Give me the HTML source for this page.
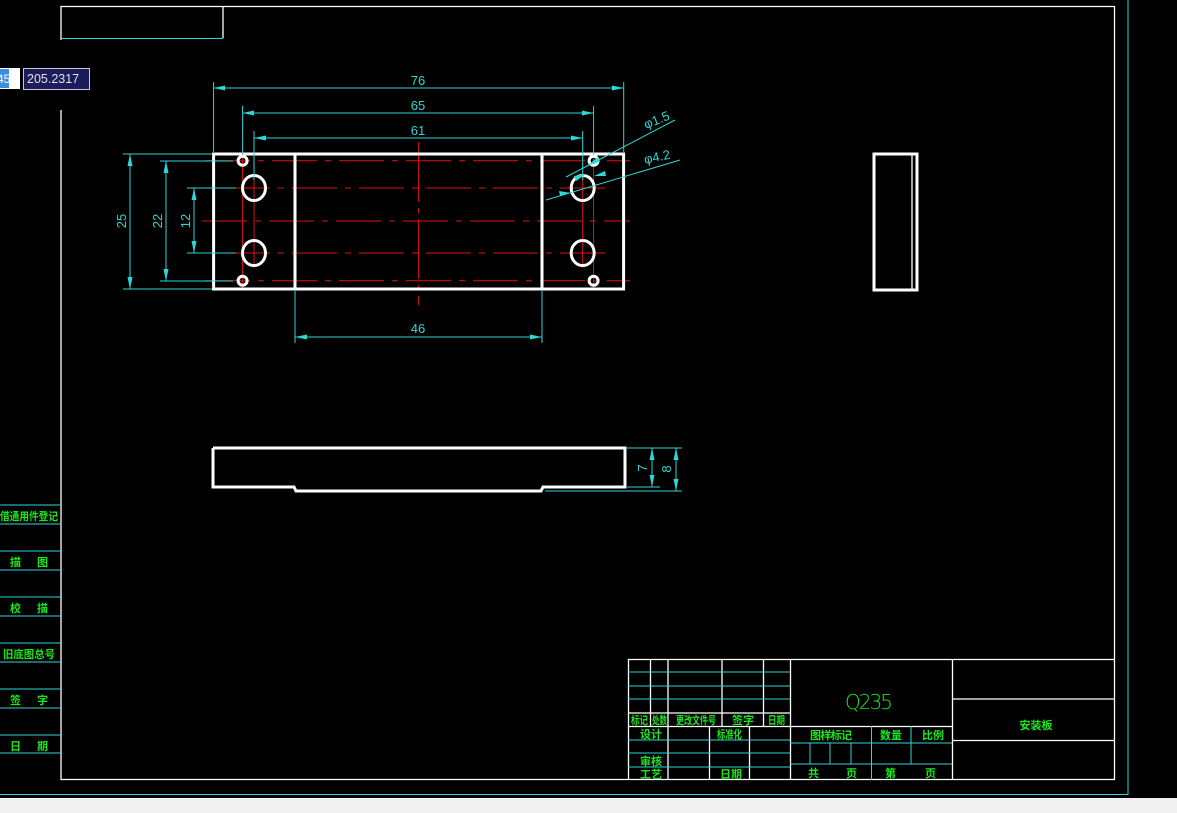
<!DOCTYPE html>
<html><head><meta charset="utf-8"><style>
html,body{margin:0;padding:0;background:#000;width:1177px;height:813px;overflow:hidden}
svg{display:block}
text{font-family:"Liberation Sans","Noto Sans CJK SC",sans-serif}
.w{stroke:#fff;fill:none;stroke-width:1.3}
.W{stroke:#fff;fill:none;stroke-width:3}
.c{stroke:#2fd6d6;fill:none;stroke-width:1}
.r{stroke:#e01010;fill:none;stroke-width:1;stroke-dasharray:45 8 6 8}
.d{fill:#2fd6d6;font-size:13px}
.g{fill:#1ee61e;font-size:11px;font-weight:bold}
.ar{fill:#2fd6d6}
</style></head><body>
<svg width="1177" height="813" viewBox="0 0 1177 813">
<rect x="0" y="0" width="1177" height="813" fill="#000"/>
<rect x="0" y="798" width="1177" height="15" fill="#f0f0f0"/>
<line x1="1128" y1="0" x2="1128" y2="795" class="c" stroke-width="1.5"/>
<line x1="0" y1="794.5" x2="1128" y2="794.5" class="c" stroke-width="1.5"/>
<polyline points="61,110 61,779.5 1114.5,779.5 1114.5,6.5 61,6.5 61,40" class="w"/>
<line x1="61" y1="38.5" x2="223" y2="38.5" class="c"/>
<line x1="223" y1="6" x2="223" y2="38" class="w"/>
<rect x="0" y="68" width="20" height="21" fill="#fff"/>
<rect x="0" y="69" width="9" height="19" fill="#3d8ee0"/>
<text x="-3" y="83" fill="#fff" font-size="12">45</text>
<rect x="23.5" y="68.5" width="66" height="21" fill="#1c1c5c" stroke="#c8c8c8"/>
<text x="27" y="83" fill="#e0e0e0" font-size="12.5">205.2317</text>
<g class="c">
<line x1="0" y1="505" x2="61" y2="505"/><line x1="0" y1="524" x2="61" y2="524"/>
<line x1="0" y1="551" x2="61" y2="551"/><line x1="0" y1="570" x2="61" y2="570"/>
<line x1="0" y1="597" x2="61" y2="597"/><line x1="0" y1="616" x2="61" y2="616"/>
<line x1="0" y1="643" x2="61" y2="643"/><line x1="0" y1="662" x2="61" y2="662"/>
<line x1="0" y1="689" x2="61" y2="689"/><line x1="0" y1="708" x2="61" y2="708"/>
<line x1="0" y1="735" x2="61" y2="735"/><line x1="0" y1="753" x2="61" y2="753"/>
</g>
<g class="g" font-size="13">
<text x="0" y="520" textLength="58" lengthAdjust="spacingAndGlyphs">借通用件登记</text>
<text x="10" y="566" textLength="38" lengthAdjust="spacing">描图</text>
<text x="10" y="612" textLength="38" lengthAdjust="spacing">校描</text>
<text x="3" y="658" textLength="52" lengthAdjust="spacingAndGlyphs">旧底图总号</text>
<text x="10" y="704" textLength="38" lengthAdjust="spacing">签字</text>
<text x="10" y="750" textLength="38" lengthAdjust="spacing">日期</text>
</g>
<g class="w">
<line x1="628" y1="659.5" x2="1114" y2="659.5"/>
<line x1="628.5" y1="659" x2="628.5" y2="780"/>
<line x1="650.5" y1="659" x2="650.5" y2="726"/>
<line x1="668" y1="659" x2="668" y2="780"/>
<line x1="722" y1="659" x2="722" y2="726"/>
<line x1="763.5" y1="659" x2="763.5" y2="726"/>
<line x1="790.5" y1="659" x2="790.5" y2="780"/>
<line x1="952.5" y1="659" x2="952.5" y2="780"/>
<line x1="628" y1="713" x2="790" y2="713"/>
<line x1="628" y1="726.5" x2="952" y2="726.5"/>
<line x1="709.5" y1="726" x2="709.5" y2="780"/>
<line x1="749.5" y1="726" x2="749.5" y2="780"/>
<line x1="952" y1="699" x2="1114" y2="699"/>
<line x1="952" y1="740.5" x2="1114" y2="740.5"/>
</g>
<g class="c">
<line x1="628" y1="672" x2="790" y2="672"/>
<line x1="628" y1="686" x2="790" y2="686"/>
<line x1="628" y1="699" x2="790" y2="699"/>
<line x1="628" y1="740" x2="790" y2="740"/>
<line x1="628" y1="753" x2="790" y2="753"/>
<line x1="628" y1="767" x2="790" y2="767"/>
<line x1="790" y1="743" x2="952" y2="743"/>
<line x1="790" y1="764" x2="952" y2="764"/>
<line x1="871.5" y1="726" x2="871.5" y2="780"/>
<line x1="911" y1="726" x2="911" y2="764"/>
<line x1="810" y1="743" x2="810" y2="764"/>
<line x1="830" y1="743" x2="830" y2="764"/>
<line x1="851" y1="743" x2="851" y2="764"/>
</g>
<g class="g" font-size="10">
<text x="631" y="724" textLength="17" lengthAdjust="spacingAndGlyphs">标记</text>
<text x="652" y="724" textLength="15" lengthAdjust="spacingAndGlyphs">处数</text>
<text x="676" y="724" textLength="40" lengthAdjust="spacingAndGlyphs">更改文件号</text>
<text x="732" y="724" textLength="22" lengthAdjust="spacing">签字</text>
<text x="768" y="724" textLength="17" lengthAdjust="spacingAndGlyphs">日期</text>
<text x="640" y="738" textLength="22" lengthAdjust="spacing">设计</text>
<text x="717" y="738" textLength="25" lengthAdjust="spacingAndGlyphs">标准化</text>
<text x="640" y="765" textLength="22" lengthAdjust="spacing">审核</text>
<text x="640" y="778" textLength="22" lengthAdjust="spacing">工艺</text>
<text x="720" y="778" textLength="22" lengthAdjust="spacing">日期</text>
<text x="810" y="739" textLength="42" lengthAdjust="spacing">图样标记</text>
<text x="880" y="739" textLength="22" lengthAdjust="spacing">数量</text>
<text x="922" y="739" textLength="22" lengthAdjust="spacing">比例</text>
<text x="808" y="777">共</text><text x="846" y="777">页</text><text x="885" y="777">第</text><text x="925" y="777">页</text>
</g>
<text x="869" y="709" text-anchor="middle" fill="#1ee61e" font-size="20" font-weight="300" textLength="48" lengthAdjust="spacing" style="font-family:'DejaVu Sans',sans-serif">Q235</text>
<text x="1036" y="729" text-anchor="middle" class="g" font-size="14">安装板</text>

<g class="r">
<line x1="205" y1="160.7" x2="630" y2="160.7"/>
<line x1="225" y1="188" x2="610" y2="188"/>
<line x1="202" y1="221" x2="630" y2="221"/>
<line x1="225" y1="253" x2="610" y2="253"/>
<line x1="205" y1="280.7" x2="630" y2="280.7"/>
<line x1="418.6" y1="142" x2="418.6" y2="305" stroke-dasharray="60 6 5 6"/>
<line x1="242.6" y1="150" x2="242.6" y2="290" stroke-dasharray="none"/>
<line x1="254" y1="175" x2="254" y2="268" stroke-dasharray="none"/>
<line x1="582.7" y1="175" x2="582.7" y2="268" stroke-dasharray="none"/>
<line x1="593.6" y1="150" x2="593.6" y2="290" stroke-dasharray="none"/>
</g>
<rect x="213.6" y="154" width="410" height="135" class="W"/>
<line x1="295" y1="154" x2="295" y2="289" class="W"/>
<line x1="542" y1="154" x2="542" y2="289" class="W"/>
<g class="W" stroke-width="2.5">
<ellipse cx="254" cy="188" rx="11.5" ry="12.5"/><ellipse cx="254" cy="253" rx="11.5" ry="12.5"/>
<ellipse cx="582.7" cy="188" rx="11.5" ry="12.5"/><ellipse cx="582.7" cy="253" rx="11.5" ry="12.5"/>
<circle cx="242.6" cy="160.7" r="4.5"/><circle cx="242.6" cy="280.7" r="4.5"/>
<circle cx="593.6" cy="160.7" r="4.5"/><circle cx="593.6" cy="280.7" r="4.5"/>
</g>
<g class="c">
<line x1="213.6" y1="82" x2="213.6" y2="152"/><line x1="623.7" y1="82" x2="623.7" y2="152"/>
<line x1="213.6" y1="88" x2="623.7" y2="88"/>
<line x1="242.6" y1="106" x2="242.6" y2="155"/><line x1="593.6" y1="106" x2="593.6" y2="155"/>
<line x1="242.6" y1="113" x2="593.6" y2="113"/>
<line x1="254" y1="131" x2="254" y2="180"/><line x1="582.7" y1="131" x2="582.7" y2="180"/>
<line x1="254" y1="138" x2="582.7" y2="138"/>
<line x1="295" y1="291" x2="295" y2="343"/><line x1="542" y1="291" x2="542" y2="343"/>
<line x1="295" y1="337" x2="542" y2="337"/>
<line x1="123" y1="154" x2="212" y2="154"/><line x1="123" y1="289" x2="212" y2="289"/>
<line x1="130" y1="154" x2="130" y2="289"/>
<line x1="160" y1="161" x2="233" y2="161"/><line x1="160" y1="281" x2="233" y2="281"/>
<line x1="166" y1="161" x2="166" y2="281"/>
<line x1="187" y1="188" x2="236" y2="188"/><line x1="187" y1="253" x2="236" y2="253"/>
<line x1="194" y1="188" x2="194" y2="253"/>
<line x1="566" y1="177" x2="675" y2="120"/>
<line x1="546" y1="200" x2="680" y2="160"/>
<line x1="627" y1="448" x2="682" y2="448"/><line x1="627" y1="487" x2="660" y2="487"/>
<line x1="545" y1="491" x2="682" y2="491"/>
<line x1="652" y1="448" x2="652" y2="487"/><line x1="676" y1="448" x2="676" y2="491"/>
</g>
<g class="ar">
<polygon points="213.6,88 225,85.5 225,90.5"/><polygon points="623.7,88 612,85.5 612,90.5"/>
<polygon points="242.6,113 254,110.5 254,115.5"/><polygon points="593.6,113 582,110.5 582,115.5"/>
<polygon points="254,138 266,135.5 266,140.5"/><polygon points="582.7,138 571,135.5 571,140.5"/>
<polygon points="295,337 307,334.5 307,339.5"/><polygon points="542,337 530,334.5 530,339.5"/>
<polygon points="130,154 127.5,166 132.5,166"/><polygon points="130,289 127.5,277 132.5,277"/>
<polygon points="166,161 163.5,173 168.5,173"/><polygon points="166,281 163.5,269 168.5,269"/>
<polygon points="194,188 191.5,200 196.5,200"/><polygon points="194,253 191.5,241 196.5,241"/>
<polygon points="652,448 649.5,460 654.5,460"/><polygon points="652,487 649.5,475 654.5,475"/>
<polygon points="676,448 673.5,460 678.5,460"/><polygon points="676,491 673.5,479 678.5,479"/>
<polygon points="588,165 598,157 600,162"/><polygon points="586,174 576,181 574,176"/>
<polygon points="594,176 605,171 606,176"/><polygon points="571,193 560,196 559,191"/>
</g>
<g class="d">
<text x="418" y="85" text-anchor="middle">76</text>
<text x="418" y="110" text-anchor="middle">65</text>
<text x="418" y="135" text-anchor="middle">61</text>
<text x="418" y="333" text-anchor="middle">46</text>
<text transform="translate(126,221) rotate(-90)" text-anchor="middle">25</text>
<text transform="translate(162,221) rotate(-90)" text-anchor="middle">22</text>
<text transform="translate(190,221) rotate(-90)" text-anchor="middle">12</text>
<text transform="translate(647,468) rotate(-90)" text-anchor="middle">7</text>
<text transform="translate(671,469) rotate(-90)" text-anchor="middle">8</text>
<text transform="translate(646,129) rotate(-22)">φ1.5</text>
<text transform="translate(645,164) rotate(-12)">φ4.2</text>
</g>
<polyline points="213,448 625,448 625,487 543,487 541,491 296,491 294,487 213,487 213,448" class="W"/>
<rect x="874" y="154" width="43" height="136" class="W"/>
<line x1="912" y1="154" x2="912" y2="290" class="w" stroke-width="2"/>
</svg>
</body></html>
